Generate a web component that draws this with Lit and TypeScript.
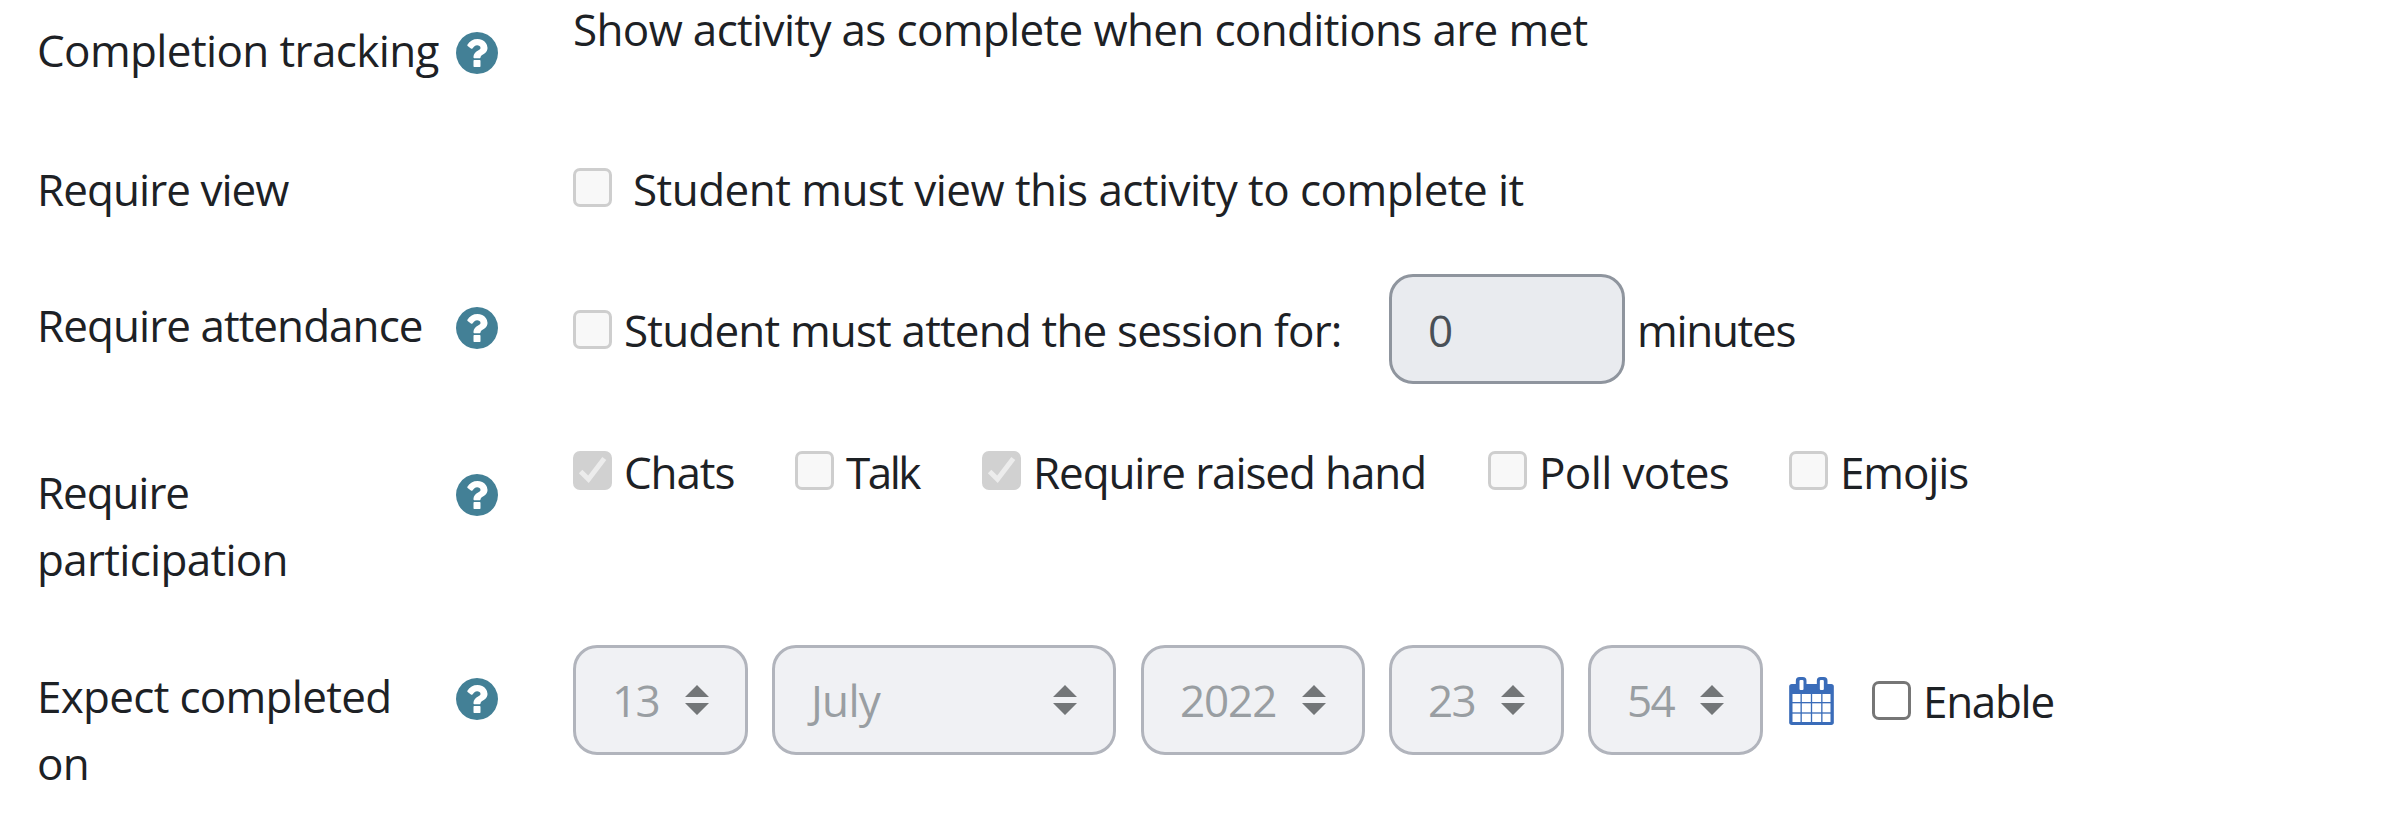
import { LitElement, html, css, svg, nothing } from "lit";
import { customElement, property } from "lit/decorators.js";
import { classMap } from "lit/directives/class-map.js";

@customElement("help-icon")
class HelpIcon extends LitElement {
  static styles = css`
    :host { display: block; width: 42px; height: 42px; flex: none; }
    svg { display: block; width: 100%; height: 100%; fill: #438096; }
  `;
  render() {
    return html`<svg viewBox="0 128 1536 1536" role="img" aria-label="Help">
      <path d="M896 1376v-192q0-14-9-23t-23-9h-192q-14 0-23 9t-9 23v192q0 14 9 23t23 9h192q14 0 23-9t9-23zm256-672q0-88-55.5-163t-138.5-116-170-41q-243 0-371 213-15 24 8 42l132 100q7 6 19 6 16 0 25-12 53-68 86-92 34-24 86-24 48 0 85.5 26t37.5 59q0 38-20 61t-68 45q-63 28-115.500 86.500t-52.5 125.500v36q0 14 9 23t23 9h192q14 0 23-9t9-23q0-19 21.500-49.500t54.500-49.500q32-18 49-28.500t46-35 44.500-48 28-60.500 12.500-81zm384 192q0 209-103 385.500t-279.500 279.500-385.500 103-385.500-103-279.500-279.500-103-385.500 103-385.500 279.500-279.500 385.500-103 385.500 103 279.500 279.500 103 385.500z"/>
    </svg>`;
  }
}

@customElement("check-box")
class CheckBox extends LitElement {
  @property({ type: Boolean }) checked = false;
  @property({ type: Boolean }) enabled = false;
  static styles = css`
    :host { display: block; width: 39px; height: 39px; flex: none; }
    .box { box-sizing: border-box; width: 39px; height: 39px; border: 3px solid #cecece; border-radius: 7px; background: #f8f8f8; }
    .enabled { border-color: #767676; background: #fff; }
    .checked { background: #d1d1d1; border-color: #d1d1d1; }
    svg { display: block; width: 33px; height: 33px; fill: none; stroke: #ececec; stroke-width: 5; }
  `;
  render() {
    return html`<div class=${classMap({ box: true, checked: this.checked, enabled: this.enabled })}>
      ${this.checked ? html`<svg viewBox="0 0 33 33"><path d="M4.600 17.500L12.500 25.200L28.300 4.600"/></svg>` : nothing}
    </div>`;
  }
}

@customElement("select-field")
class SelectField extends LitElement {
  static styles = css`
    :host {
      box-sizing: border-box; display: flex; align-items: center; justify-content: space-between; flex: none;
      height: 110px; padding: 0 36px; border: 3px solid #b1b4bc; border-radius: 24px;
      background: #f0f1f4; color: #999ea2;
    }
    .value { padding-top: 1px; }
    svg { display: block; width: 24px; height: 30px; fill: #737678; }
  `;
  render() {
    return html`<div class="value"><slot></slot></div><svg viewBox="0 0 24 30"><path d="M12 0L24 12H0ZM0 18H24L12 30Z"/></svg>`;
  }
}

const cells = [87, 115, 146].flatMap((y, r) =>
  [53, 81, 112, 143].map((x, c) => svg`<rect x=${x} y=${y} width=${[24, 27, 27, 24][c]} height=${[24, 27, 25][r]} fill="#fff"/>`));

@customElement("app-root")
class AppRoot extends LitElement {
  static styles = css`
    :host {
      display: block; height: 830px; overflow: hidden; background: #fff; color: #1d2125;
      font: 44px/67px "Open Sans", "Noto Sans", sans-serif; letter-spacing: -0.7px;
    }
    .form { display: grid; grid-template-rows: 155px 119px 164px 207px 185px; }
    .row { display: grid; grid-template-columns: 461px 1fr; column-gap: 75px; align-items: start; padding-left: 37px; }
    .label { display: flex; justify-content: space-between; align-items: flex-start; white-space: nowrap; padding-top: 1px; }
    .label help-icon { margin-top: 15px; }
    .p16 { padding-top: 17px; }
    .p18 { padding-top: 18px; }
    .p21 { padding-top: 21px; }
    .field { display: flex; align-items: center; white-space: nowrap; }
    .heading { line-height: 61px; margin-top: -1px; }
    .up { margin-bottom: 2px; }
    .option { display: flex; align-items: center; gap: 12px; }
    .option span, .unit { padding-top: 1px; margin-bottom: -1px; }
    .wide { gap: 21px; }
    .w0 { width: 222px; } .w1 { width: 187px; } .w2 { width: 506px; } .w3 { width: 301px; }
    .attend { width: 816px; }
    .minutes-input {
      box-sizing: border-box; width: 236px; height: 110px; padding: 20px 0 0 36px; margin-right: 12px;
      border: 3px solid #8f959e; border-radius: 24px; background: #e9ebef; color: #495057;
    }
    .selects { gap: 24px; }
    .s175 { width: 175px; }
    .s344 { width: 344px; margin-right: 1px; }
    .s224 { width: 224px; }
    .calendar { display: block; width: 45px; height: 48px; margin: 2px 14px 0 2px; fill: #3a6cb9; }
    .t05 { letter-spacing: -0.54px; }
    .t06 { letter-spacing: -0.62px; }
    .t065 { letter-spacing: -0.65px; }
    .t08 { letter-spacing: -0.83px; }
    .t09 { letter-spacing: -0.95px; }
    .t10 { letter-spacing: -1.1px; }
    .t13 { letter-spacing: -1.300px; }
    .t17 { letter-spacing: -1.700px; }
    .t25 { letter-spacing: -2.5px; }
  `;
  render() {
    return html`<div class="form">
      <div class="row">
        <div class="label p16"><span class="t06">Completion tracking</span><help-icon></help-icon></div>
        <div class="field heading"><span class="t065">Show activity as complete when conditions are met</span></div>
      </div>
      <div class="row">
        <div class="label"><span class="t09">Require view</span></div>
        <div class="field"><div class="option wide"><check-box class="up"></check-box><span class="t05">Student must view this activity to complete it</span></div></div>
      </div>
      <div class="row">
        <div class="label p18"><span class="t09">Require attendance</span><help-icon></help-icon></div>
        <div class="field">
          <div class="option attend"><check-box></check-box><span class="t08">Student must attend the session for:</span></div>
          <div class="minutes-input">0</div>
          <span class="unit t13">minutes</span>
        </div>
      </div>
      <div class="row">
        <div class="label p21"><span><span class="t10">Require</span><br>participation</span><help-icon></help-icon></div>
        <div class="field">
          <div class="option w0"><check-box class="up" checked></check-box><span class="t10">Chats</span></div>
          <div class="option w1"><check-box class="up"></check-box><span class="t25">Talk</span></div>
          <div class="option w2"><check-box class="up" checked></check-box><span class="t10">Require raised hand</span></div>
          <div class="option w3"><check-box class="up"></check-box><span class="t06">Poll votes</span></div>
          <div class="option"><check-box class="up"></check-box><span class="t10">Emojis</span></div>
        </div>
      </div>
      <div class="row">
        <div class="label p18"><span>Expect completed<br>on</span><help-icon></help-icon></div>
        <div class="field selects">
          <select-field class="s175 t17">13</select-field>
          <select-field class="s344">July</select-field>
          <select-field class="s224 t10">2022</select-field>
          <select-field class="s175 t17">23</select-field>
          <select-field class="s175 t17">54</select-field>
          <svg class="calendar" viewBox="43 36 134 144">
            <rect x="43" y="57" width="134" height="123" rx="8"/>
            <rect x="63" y="36" width="32" height="45" rx="11"/>
            <rect x="126" y="36" width="32" height="45" rx="11"/>
            <rect x="74" y="45" width="12" height="30" rx="3" fill="#fff"/>
            <rect x="135" y="45" width="12" height="30" rx="3" fill="#fff"/>
            ${cells}
          </svg>
          <div class="option"><check-box enabled></check-box><span class="t13">Enable</span></div>
        </div>
      </div>
    </div>`;
  }
}
